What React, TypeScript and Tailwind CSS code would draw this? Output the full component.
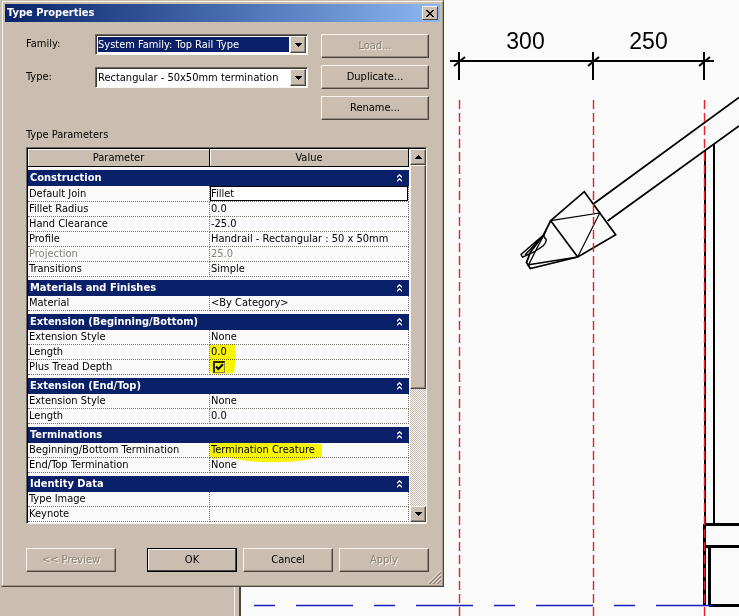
import { useState } from 'react'
import type { ButtonHTMLAttributes, ReactNode } from 'react'
import clsx from 'clsx'

type Row = {
  name: string
  value?: string
  muted?: boolean
  kind?: 'edit' | 'check'
  marker?: 'short' | 'long'
}

type Group = { title: string; rows: Row[] }

const groups: Group[] = [
  {
    title: 'Construction',
    rows: [
      { name: 'Default Join', value: 'Fillet', kind: 'edit' },
      { name: 'Fillet Radius', value: '0.0' },
      { name: 'Hand Clearance', value: '-25.0' },
      { name: 'Profile', value: 'Handrail - Rectangular : 50 x 50mm' },
      { name: 'Projection', value: '25.0', muted: true },
      { name: 'Transitions', value: 'Simple' },
    ],
  },
  { title: 'Materials and Finishes', rows: [{ name: 'Material', value: '<By Category>' }] },
  {
    title: 'Extension (Beginning/Bottom)',
    rows: [
      { name: 'Extension Style', value: 'None' },
      { name: 'Length', value: '0.0', marker: 'short' },
      { name: 'Plus Tread Depth', kind: 'check' },
    ],
  },
  {
    title: 'Extension (End/Top)',
    rows: [
      { name: 'Extension Style', value: 'None' },
      { name: 'Length', value: '0.0' },
    ],
  },
  {
    title: 'Terminations',
    rows: [
      { name: 'Beginning/Bottom Termination', value: 'Termination Creature', marker: 'long' },
      { name: 'End/Top Termination', value: 'None' },
    ],
  },
  { title: 'Identity Data', rows: [{ name: 'Type Image' }, { name: 'Keynote' }] },
]

const raised = 'border border-t-[#f8f4ee] border-l-[#f8f4ee] border-r-[#4a443c] border-b-[#4a443c]'

type DialogButtonProps = ButtonHTMLAttributes<HTMLButtonElement> & { primary?: boolean }

function DialogButton({ primary, className, children, ...rest }: DialogButtonProps) {
  return (
    <button
      type="button"
      className={clsx(
        'flex h-6 items-center justify-center bg-[#c9beaf]',
        raised,
        primary
          ? 'outline outline-1 -outline-offset-1 outline-black shadow-[inset_-1px_-1px_0_#4a443c,inset_1px_1px_0_#f8f4ee]'
          : 'shadow-[inset_-1px_-1px_0_#948a7d]',
        rest.disabled && 'text-[#8b8276] [text-shadow:1px_1px_0_#f8f4ee]',
        className,
      )}
      {...rest}
    >
      {children}
    </button>
  )
}

function Arrow({ up }: { up?: boolean }) {
  return (
    <svg width="7" height="4" viewBox="0 0 7 4" shapeRendering="crispEdges">
      <path d={up ? 'M3 0h1v1h1v1h1v1h1v1H0V3h1V2h1V1h1z' : 'M0 0h7v1H6v1H5v1H4v1H3V3H2V2H1V1H0z'} />
    </svg>
  )
}

function Combo({ id, label, value, selected }: { id: string; label: string; value: string; selected?: boolean }) {
  return (
    <div className="flex items-center">
      <label htmlFor={id} className="w-[69px]">{label}</label>
      <div className="flex h-[21px] flex-1 border border-t-[#6e675d] border-l-[#6e675d] border-r-[#f8f4ee] border-b-[#f8f4ee] bg-white p-px shadow-[inset_1px_1px_0_#3d3831]">
        <select
          id={id}
          className={clsx(
            'min-w-0 flex-1 appearance-none border border-white outline-none',
            selected ? 'bg-[#0a2069] text-white' : 'bg-white',
          )}
        >
          <option>{value}</option>
        </select>
        <span className={clsx('pointer-events-none flex w-4 items-center justify-center bg-[#c9beaf] shadow-[inset_-1px_-1px_0_#948a7d]', raised)}>
          <Arrow />
        </span>
      </div>
    </div>
  )
}

function Marker({ kind }: { kind: 'short' | 'long' }) {
  if (kind === 'short') {
    return (
      <svg className="pointer-events-none absolute -top-px left-0 mix-blend-multiply" width="26" height="30" viewBox="0 0 26 30">
        <path d="M0 1 L25 0 L26 14 L24 29 L3 30 L0 27z" fill="#fbfb00" />
      </svg>
    )
  }
  return (
    <svg className="pointer-events-none absolute top-0 left-0 mix-blend-multiply" width="114" height="20" viewBox="0 0 114 20">
      <path d="M0 0 H84 L112 1 V14 C98 17 84 19 70 19 C46 20 28 17 16 14 L4 16 L0 14z" fill="#fbfb00" />
    </svg>
  )
}

function ValueCell({ row }: { row: Row }) {
  const [text, setText] = useState(row.value ?? '')
  const [checked, setChecked] = useState(true)
  let content: ReactNode = row.value

  if (row.kind === 'edit') {
    content = (
      <input
        aria-label={row.name}
        value={text}
        onChange={(e) => setText(e.target.value)}
        className="block h-[15px] w-full border border-black bg-white outline-none"
      />
    )
  }
  if (row.kind === 'check') {
    content = (
      <span className="relative ml-0.5 block size-3">
        <input
          type="checkbox"
          aria-label={row.name}
          checked={checked}
          onChange={(e) => setChecked(e.target.checked)}
          className="block size-3 appearance-none border-t-2 border-r border-b border-l-2 border-t-[#2b2b10] border-l-[#2b2b10] border-r-[#8a8a50] border-b-[#8a8a50]"
        />
        {checked && (
          <svg className="pointer-events-none absolute top-0.5 left-0.5" width="9" height="9" viewBox="0 0 9 9">
            <path d="M1 3.5 L3.3 6 L8 1.3" fill="none" stroke="#000" strokeWidth="2" />
          </svg>
        )}
      </span>
    )
  }

  return (
    <td
      className={clsx(
        'relative h-[15px] border-r border-b border-dotted border-[#77736c] p-0 whitespace-nowrap',
        row.kind !== 'edit' && 'pl-px',
        row.muted && 'text-[#85817b]',
      )}
    >
      {content}
      {row.marker && <Marker kind={row.marker} />}
    </td>
  )
}

function ParameterTable() {
  return (
    <table className="min-w-0 flex-1 table-fixed border-separate border-spacing-0 self-start leading-[14px]">
      <thead>
        <tr className="bg-[#c9beaf]">
          <th className="h-[18px] w-[182px] border-r border-b border-black p-0 font-normal shadow-[inset_1px_1px_0_#f8f4ee]">Parameter</th>
          <th className="h-[18px] border-r border-b border-black p-0 font-normal shadow-[inset_1px_1px_0_#f8f4ee]">Value</th>
        </tr>
      </thead>
      {groups.map((g) => (
        <tbody key={g.title}>
          <tr>
            <th colSpan={2} className="h-[19px] border-t-[3px] border-[#fbfafa] bg-[#0a2069] p-0 text-left font-bold text-white">
              <div className="flex items-center justify-between pr-[7px] pl-0.5">
                {g.title}
                <button type="button" aria-label={`Collapse ${g.title}`}>
                  <svg width="5" height="8" viewBox="0 0 5 8" fill="none" stroke="#fff">
                    <path d="M0 3.2 L2.5 0.8 L5 3.2 M0 7.2 L2.5 4.8 L5 7.2" strokeWidth="1.2" />
                  </svg>
                </button>
              </div>
            </th>
          </tr>
          {g.rows.map((r) => (
            <tr key={r.name}>
              <td
                className={clsx(
                  'h-[15px] border-r border-b border-dotted border-[#77736c] p-0 pl-px whitespace-nowrap',
                  r.muted && 'text-[#85817b]',
                )}
              >
                {r.name}
              </td>
              <ValueCell row={r} />
            </tr>
          ))}
        </tbody>
      ))}
    </table>
  )
}

function ScrollBar() {
  const part = clsx('flex w-4 items-center justify-center bg-[#c9beaf] shadow-[inset_-1px_-1px_0_#948a7d]', raised)
  return (
    <div className="ml-px flex w-4 flex-col bg-[repeating-conic-gradient(#c9beaf_0_25%,#f6f2ee_0_50%)] bg-[length:2px_2px]">
      <button type="button" aria-label="Scroll up" className={clsx(part, 'h-4')}><Arrow up /></button>
      <div className={clsx(part, 'h-56')} />
      <button type="button" aria-label="Scroll down" className={clsx(part, 'mt-auto h-4')}><Arrow /></button>
    </div>
  )
}

function TypeProperties() {
  return (
    <section
      role="dialog"
      aria-label="Type Properties"
      className="absolute top-0 left-px w-[443px] border border-t-[#c9beaf] border-l-[#c9beaf] border-r-[#4a443c] border-b-[#4a443c] bg-[#c9beaf]"
    >
      <div className="border border-t-[#f8f4ee] border-l-[#f8f4ee] border-r-[#a39989] border-b-[#a39989] p-0.5">
        <header className="flex h-[18px] items-center justify-between bg-linear-to-r from-[#0a246a] to-[#8db8f4] pr-0.5 pl-0.5">
          <h1 className="leading-[18px] font-bold text-white">Type Properties</h1>
          <button type="button" aria-label="Close" className={clsx('flex h-[14px] w-4 items-center justify-center bg-[#c9beaf]', raised)}>
            <svg width="8" height="7" viewBox="0 0 8 7" shapeRendering="crispEdges">
              <path d="M0 0h2v1h1v1h2V1h1V0h2v1H7v1H6v1H5v1h1v1h1v1h1v1H6V6H5V5H3v1H2v1H0V6h1V5h1V4h1V3H2V2H1V1H0z" />
            </svg>
          </button>
        </header>

        <div className="pt-3 pr-[11px] pb-[11px] pl-[21px]">
          <div className="flex justify-between">
            <div className="flex w-[282px] flex-col gap-3">
              <Combo id="family" label="Family:" value="System Family: Top Rail Type" selected />
              <Combo id="type" label="Type:" value="Rectangular - 50x50mm termination" />
            </div>
            <div className="flex w-[108px] flex-col gap-[7px]">
              <DialogButton disabled>Load...</DialogButton>
              <DialogButton>Duplicate...</DialogButton>
              <DialogButton>Rename...</DialogButton>
            </div>
          </div>

          <h2 className="mt-[7px] mb-1 leading-4">Type Parameters</h2>
          <div className="mr-0.5 flex border border-t-[#6e675d] border-l-[#6e675d] border-r-[#f8f4ee] border-b-[#f8f4ee] bg-[#fbfafa]">
            <div className="flex flex-1 border-t border-l border-black pb-px">
              <ParameterTable />
              <ScrollBar />
            </div>
          </div>

          <div className="mt-6 flex gap-1.5">
            <DialogButton disabled className="mr-auto w-[90px]">&lt;&lt; Preview</DialogButton>
            <DialogButton primary className="w-[90px]">OK</DialogButton>
            <DialogButton className="w-[90px]">Cancel</DialogButton>
            <DialogButton disabled className="w-[90px]">Apply</DialogButton>
          </div>
        </div>
      </div>
      <svg className="absolute right-0.5 bottom-0.5" width="13" height="13" viewBox="0 0 13 13">
        <path d="M1 13 L13 1 M5 13 L13 5 M9 13 L13 9" stroke="#857b6e" strokeWidth="1.5" />
        <path d="M0 12.5 L12.5 0 M4 12.5 L12.5 4 M8 12.5 L12.5 8" stroke="#fff" />
      </svg>
    </section>
  )
}

function RailingElevation() {
  return (
    <svg viewBox="241 0 498 616" className="block w-full" fill="none" stroke="#000">
      {/* dimension string */}
      <path d="M450 61H714M459 52V80M593 52V80M704 52V80" strokeWidth="2" />
      <path d="M454 66L465 57M588 66L599 57M699 66L710 57" strokeWidth="2" />
      <g fill="#000" stroke="none" fontSize="23" textAnchor="middle" fontFamily='"Liberation Sans", Arial, sans-serif'>
        <text x="525.5" y="49">300</text>
        <text x="648.5" y="49">250</text>
      </g>

      {/* rail and post */}
      <path d="M594 203.5L739 97.5M607.5 221L739 126" strokeWidth="1.8" />
      <path d="M705 150V524M714 144V524" strokeWidth="2" />
      <g strokeWidth="3">
        <path d="M704.5 524V606M704 524.5H739M704 546.5H739M709.5 546V606" />
        <path d="M709 605.5H739" />
      </g>

      {/* termination creature */}
      <path d="M584.3 191.7L615.7 234.7L577.7 257L550.7 220.7Z" strokeWidth="1.7" />
      <path d="M550.7 220.7L599.7 213L577.7 257" strokeWidth="1.2" />
      <path d="M550.7 220.7L543.5 235L530.5 252L526.5 262.5L530.3 268.5L577.7 257" strokeWidth="1.8" />
      <path d="M527 265L577.7 257M546 231L536 250L528.5 265" strokeWidth="1.3" />
      <path d="M543.5 235L521 254.5L522.5 257L534 252L543 246Q547 242 546 239Q543.5 238 544 234M541 238L525 255" strokeWidth="1.4" />

      {/* reference planes */}
      <path d="M459.5 100V616M593.5 100V616M704.5 100V616" stroke="#e8202a" strokeWidth="1.4" strokeDasharray="9 4" />
      <path d="M254 605.5H713" stroke="#1c1cc0" strokeWidth="1.6" strokeDasharray="21 21 57 21" />
    </svg>
  )
}

export default function App() {
  return (
    <div className='relative flex min-h-screen overflow-hidden bg-[#fbfafa] font-["DejaVu_Sans_Condensed","DejaVu_Sans",sans-serif] text-[11px] text-black'>
      <aside className="flex w-[241px] shrink-0 justify-end border-r-2 border-[#4a443c] bg-[#c9beaf]">
        <div className="mr-1 w-px bg-[#f8f4ee]" />
      </aside>
      <main className="min-w-0 flex-1">
        <RailingElevation />
      </main>
      <TypeProperties />
    </div>
  )
}
